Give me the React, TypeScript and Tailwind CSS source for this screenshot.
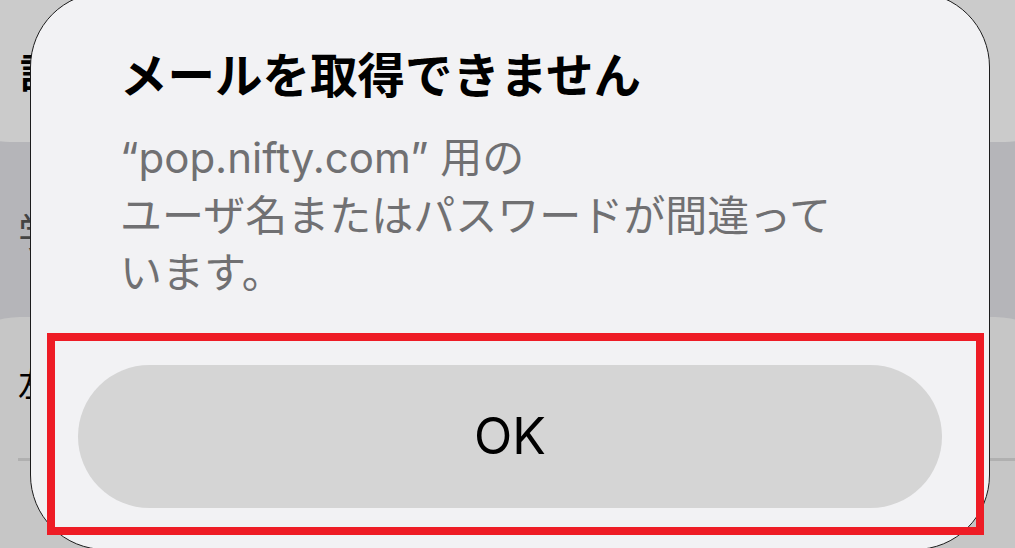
export default function App() {
  return (
    <div className="relative w-[1015px] h-[548px] overflow-hidden bg-[#b5b5b9]">
      {/* blurred settings list behind the alert */}
      <div className="absolute inset-0 flex flex-col">
        <div className="h-[142px] mx-[-60px] bg-[#cbcbcb] rounded-b-[70px] flex items-center pl-[80px]">
          <span className="text-[40px] font-bold text-black font-['Noto_Sans_CJK_JP',sans-serif]">設定</span>
        </div>
        <div className="h-[175px] flex items-center pl-[18px]">
          <span className="text-[40px] text-[#444] font-['Noto_Sans_CJK_JP',sans-serif]">学習</span>
        </div>
        <div className="flex-1 mx-[-60px] bg-[#c6c6c6] rounded-t-[80px] flex flex-col pl-[78px] pt-[40px]">
          <span className="text-[34px] text-black font-['Noto_Sans_CJK_JP',sans-serif]">左</span>
          <div className="mt-[50px] h-[3px] bg-[#b0b0b0]" />
        </div>
      </div>

      <div className="relative pl-[30px] pr-[25px]">
        <div className="mt-[-8px] h-[558px] bg-[#f2f2f4] border border-[#1c1c1c] rounded-[75px] flex flex-col">
          <div className="pl-[89px] pr-[50px] pt-[52px]">
            <h1 className="text-[47.5px] leading-[56px] font-bold text-black font-['Noto_Sans_CJK_JP',sans-serif] whitespace-nowrap">
              メールを取得できません
            </h1>
            <p className="mt-[28px] text-[42px] leading-[57.5px] text-[#707072] font-['Inter','Noto_Sans_CJK_JP',sans-serif]">
              “pop.nifty.com” 用の
              <br />
              ユーザ名またはパスワードが間違って
              <br />
              います。
            </p>
          </div>
          <div className="mt-[63px] mx-[47px]">
            <button className="w-full h-[143px] rounded-full bg-[#d5d5d5] text-[50px] text-black font-['Inter',sans-serif]">
              OK
            </button>
          </div>
        </div>
      </div>

      {/* annotation frame */}
      <div className="absolute left-[47px] top-[333px] w-[937px] h-[202px] border-[8px] border-[#ee1c25]" />
    </div>
  );
}
